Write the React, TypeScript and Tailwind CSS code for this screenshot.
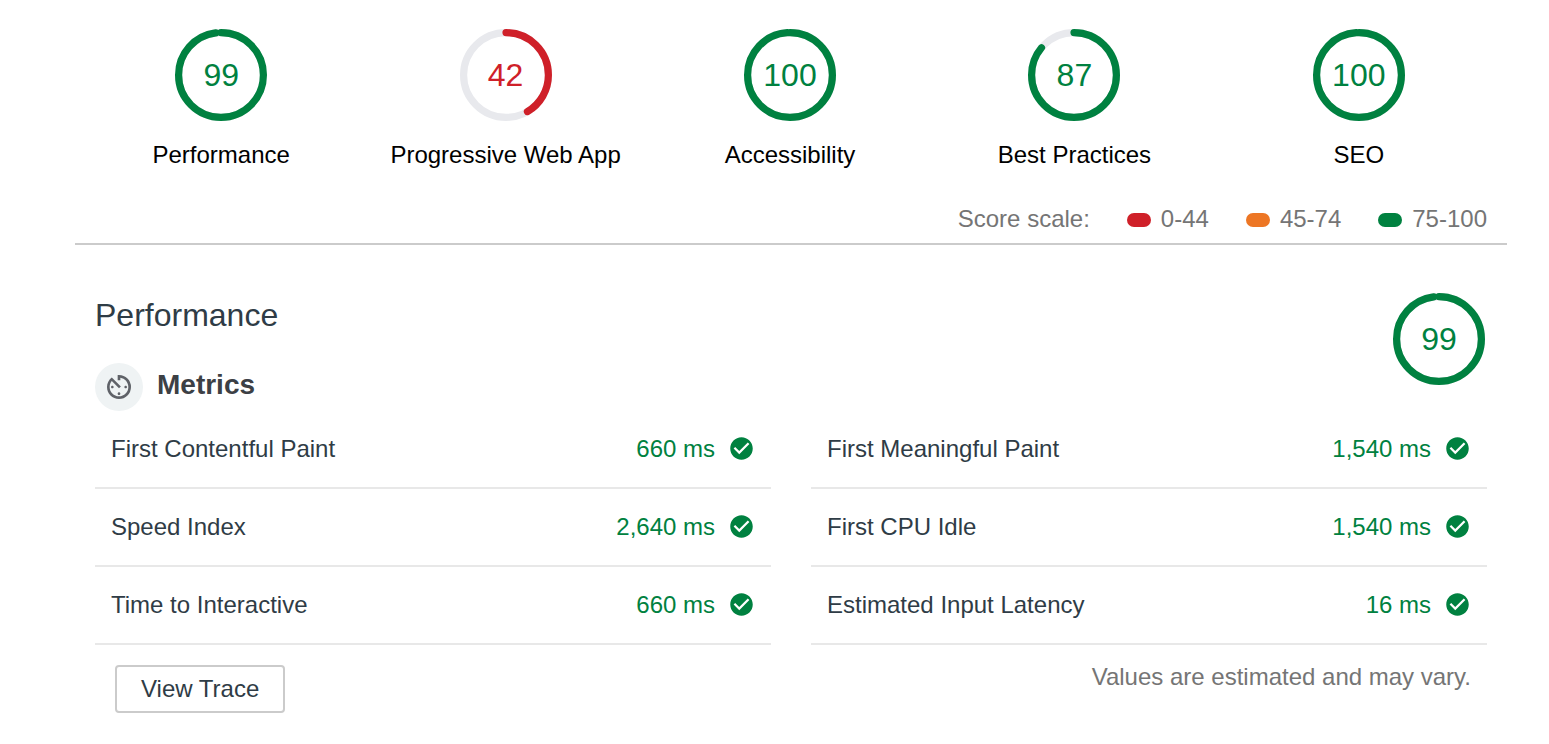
import { MdAvTimer, MdCheckCircle } from "react-icons/md";

const categories = [
  { title: "Performance", score: 99 },
  { title: "Progressive Web App", score: 42 },
  { title: "Accessibility", score: 100 },
  { title: "Best Practices", score: 87 },
  { title: "SEO", score: 100 },
];

const scale = [
  { range: "0-44", color: "bg-[#cf2029]" },
  { range: "45-74", color: "bg-[#ed7624]" },
  { range: "75-100", color: "bg-[#008140]" },
];

const metrics = [
  { name: "First Contentful Paint", value: "660 ms" },
  { name: "First Meaningful Paint", value: "1,540 ms" },
  { name: "Speed Index", value: "2,640 ms" },
  { name: "First CPU Idle", value: "1,540 ms" },
  { name: "Time to Interactive", value: "660 ms" },
  { name: "Estimated Input Latency", value: "16 ms" },
];

function scoreColor(score: number) {
  if (score >= 75) return "text-[#008140]";
  if (score >= 45) return "text-[#ed7624]";
  return "text-[#cf2029]";
}

function Gauge({ score }: { score: number }) {
  // The arc stops slightly short so that its round caps do not overlap early.
  const arc = (score / 100) * 329;
  return (
    <div className={`grid size-24 shrink-0 place-items-center ${scoreColor(score)}`}>
      <svg
        viewBox="0 0 120 120"
        className="col-start-1 row-start-1 size-24 -rotate-90"
        fill="none"
        strokeWidth="9"
        aria-hidden="true"
      >
        <circle cx="60" cy="60" r="53" stroke="#e8e9ed" />
        <circle
          cx="60"
          cy="60"
          r="53"
          stroke="currentColor"
          strokeLinecap="round"
          strokeDasharray={`${arc} 333`}
        />
      </svg>
      <span className="col-start-1 row-start-1 text-[32px] leading-10">{score}</span>
    </div>
  );
}

export default function App() {
  return (
    <main className="bg-white pt-[27px] pr-[42px] pb-8 pl-[75px] font-['Liberation_Sans',Arial,sans-serif] text-2xl leading-8 text-[#2f3c46]">
      <header className="border-b-2 border-[#cbcbcb] pb-2">
        <ul className="grid grid-cols-5 pr-[6px] pl-1">
          {categories.map((c) => (
            <li key={c.title} className="flex flex-col items-center gap-4 text-black">
              <Gauge score={c.score} />
              <a href="#performance" className="whitespace-nowrap">{c.title}</a>
            </li>
          ))}
        </ul>
        <div className="mt-8 flex justify-end gap-[37px] pr-5 text-[#757575]">
          <span>Score scale:</span>
          {scale.map((s) => (
            <span key={s.range} className="flex items-center gap-[10px]">
              <span className={`mt-[2px] h-[14px] w-6 rounded-full ${s.color}`} />
              {s.range}
            </span>
          ))}
        </div>
      </header>

      <section id="performance" className="px-5 pt-[46px]">
        <div className="flex items-start justify-between">
          <div className="pt-1">
            <h1 className="text-[32px] leading-10">Performance</h1>
            <div className="mt-7 flex items-center gap-[14px]">
              <span className="flex size-12 items-center justify-center rounded-full bg-[#eff3f4] text-[#5f6268]">
                <MdAvTimer className="size-8" aria-hidden="true" />
              </span>
              <h2 className="pb-1 text-[28px] font-bold text-[#3c4045]">Metrics</h2>
            </div>
          </div>
          <Gauge score={99} />
        </div>

        <dl className="grid grid-cols-2 gap-x-10">
          {metrics.map((m) => (
            <div
              key={m.name}
              className="flex items-center justify-between border-b-2 border-[#e8e8e8] px-4 py-[22px]"
            >
              <dt>{m.name}</dt>
              <dd className="flex items-center gap-[13px] text-[#008140]">
                {m.value}
                <MdCheckCircle className="mb-px size-[27px]" aria-label="Passed" />
              </dd>
            </div>
          ))}
        </dl>

        <div className="flex items-start justify-between pt-4 pr-4 pl-5">
          <button
            type="button"
            className="mt-1 h-12 rounded border-2 border-[#cbcbcb] px-6"
          >
            View Trace
          </button>
          <p className="text-[#757575]">Values are estimated and may vary.</p>
        </div>
      </section>
    </main>
  );
}
